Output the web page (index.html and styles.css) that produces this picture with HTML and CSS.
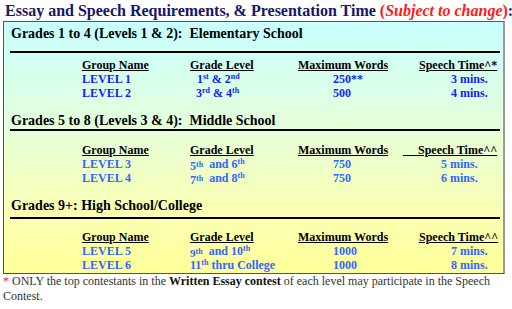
FILE: index.html
```html
<!DOCTYPE html>
<html>
<head>
<meta charset="utf-8">
<link rel="stylesheet" href="styles.css">
</head>
<body>
<h1 class="title">Essay and Speech Requirements, &amp; Presentation Time <span class="red">(<i>Subject to change</i>)</span>:</h1>
<div class="box">
  <section class="sec sec1">
    <h2 class="sec-head">Grades 1 to 4 (Levels 1 &amp; 2):&nbsp; Elementary School</h2>
    <div class="row head">
      <span class="c1"><u>Group Name</u></span>
      <span class="c2"><u>Grade Level</u></span>
      <span class="c3"><u>Maximum Words</u></span>
      <span class="c4"><u>Speech Time^*</u></span>
    </div>
    <div class="row data blue1">
      <span class="c1">LEVEL 1</span>
      <span class="c2 ind">1<sup>st</sup> &amp; 2<sup>nd</sup></span>
      <span class="c3 num">250**</span>
      <span class="c4 t1">3 mins.</span>
    </div>
    <div class="row data blue1">
      <span class="c1">LEVEL 2</span>
      <span class="c2 ind2">3<sup>rd</sup> &amp; 4<sup>th</sup></span>
      <span class="c3 num">500</span>
      <span class="c4 t1">4 mins.</span>
    </div>
  </section>

  <section class="sec sec2">
    <h2 class="sec-head">Grades 5 to 8 (Levels 3 &amp; 4):&nbsp; Middle School</h2>
    <div class="row head">
      <span class="c1"><u>Group Name</u></span>
      <span class="c2"><u>Grade Level</u></span>
      <span class="c3"><u>Maximum Words</u></span>
      <span class="c4 shift"><u>&nbsp;&nbsp;&nbsp;&nbsp;&nbsp;Speech Time^^</u></span>
    </div>
    <div class="row data blue2">
      <span class="c1">LEVEL 3</span>
      <span class="c2"><span class="lo">5</span><span class="mid">th</span>&nbsp; and 6<sup>th</sup></span>
      <span class="c3 num">750</span>
      <span class="c4 t2">5 mins.</span>
    </div>
    <div class="row data blue2">
      <span class="c1">LEVEL 4</span>
      <span class="c2"><span class="lo">7</span><span class="mid">th</span>&nbsp; and 8<sup>th</sup></span>
      <span class="c3 num">750</span>
      <span class="c4 t2">6 mins.</span>
    </div>
  </section>

  <section class="sec sec3">
    <h2 class="sec-head">Grades 9+: High School/College</h2>
    <div class="row head">
      <span class="c1"><u>Group Name</u></span>
      <span class="c2"><u>Grade Level</u></span>
      <span class="c3"><u>Maximum Words</u></span>
      <span class="c4"><u>Speech Time^^</u></span>
    </div>
    <div class="row data blue2">
      <span class="c1">LEVEL 5</span>
      <span class="c2"><span class="lo sm">9</span><span class="mid">th</span>&nbsp; and 10<sup>th</sup></span>
      <span class="c3 num">1000</span>
      <span class="c4 t1">7 mins.</span>
    </div>
    <div class="row data blue2">
      <span class="c1">LEVEL 6</span>
      <span class="c2">11<sup>th</sup> thru College</span>
      <span class="c3 num">1000</span>
      <span class="c4 t1">8 mins.</span>
    </div>
  </section>
</div>
<p class="note"><span class="star">*</span> ONLY the top contestants in the <b>Written Essay contest</b> of each level may participate in the Speech Contest.</p>
</body>
</html>
```

FILE: styles.css
```css
html, body {
  margin: 0;
  padding: 0;
  background: #ffffff;
}
body {
  font-family: "Liberation Serif", "Times New Roman", Times, "DejaVu Serif", serif;
  width: 512px;
  overflow: hidden;
}
.title {
  margin: 0;
  padding: 1px 0 0 5px;
  font-size: 16px;
  line-height: 20px;
  font-weight: bold;
  color: #16166a;
  white-space: nowrap;
}
.red {
  color: #ff1a1a;
}
.box {
  width: 499px;
  margin: 0 0 0 3px;
  border: 1px solid #555555;
  border-right: 2px solid #9a9a9a;
  background: linear-gradient(to bottom, #c8ffff 0%, #e4ffdc 40%, #faffb4 75%, #ffff99 100%);
}
.sec-head {
  margin: 0 3px 0 6px;
  padding-left: 1px;
  font-size: 14px;
  line-height: 16px;
  font-weight: bold;
  color: #000000;
  border-bottom: 2px solid #000000;
}
.sec1 { padding-top: 4px; }
.sec1 .sec-head { padding-bottom: 9px; }
.sec1 .head { margin-top: 5px; }

.sec2 { padding-top: 13px; }
.sec2 .sec-head { padding-bottom: 0; }
.sec2 .head { margin-top: 12px; }

.sec3 { padding-top: 13px; padding-bottom: 1px; }
.sec3 .sec-head { padding-bottom: 3px; }
.sec3 .head { margin-top: 11px; }

.row {
  display: grid;
  grid-template-columns: 108px 108px 121px 79px;
  padding-left: 78px;
  height: 14px;
  font-size: 12px;
  line-height: 14px;
  font-weight: bold;
  white-space: nowrap;
}
.head {
  color: #000000;
}
.blue1 { color: #1a1aff; }
.blue2 { color: #3366ff; }
.ind { padding-left: 7px; }
.ind2 { padding-left: 6px; }
.num { padding-left: 35px; }
.t1 { padding-left: 32px; }
.t2 { padding-left: 22px; }
.shift { margin-left: -16px; }
sup {
  font-size: 8px;
  line-height: 0;
  vertical-align: 4px;
}
.lo {
  line-height: 0;
  vertical-align: -2px;
}
.lo.sm {
  font-size: 11px;
}
.mid {
  font-size: 8px;
  line-height: 0;
  vertical-align: 1px;
}
.note {
  margin: 0 0 0 3px;
  width: 500px;
  font-size: 12px;
  line-height: 15px;
  color: #333333;
}
.note b {
  color: #111111;
}
.star {
  color: #ff2020;
}
```
